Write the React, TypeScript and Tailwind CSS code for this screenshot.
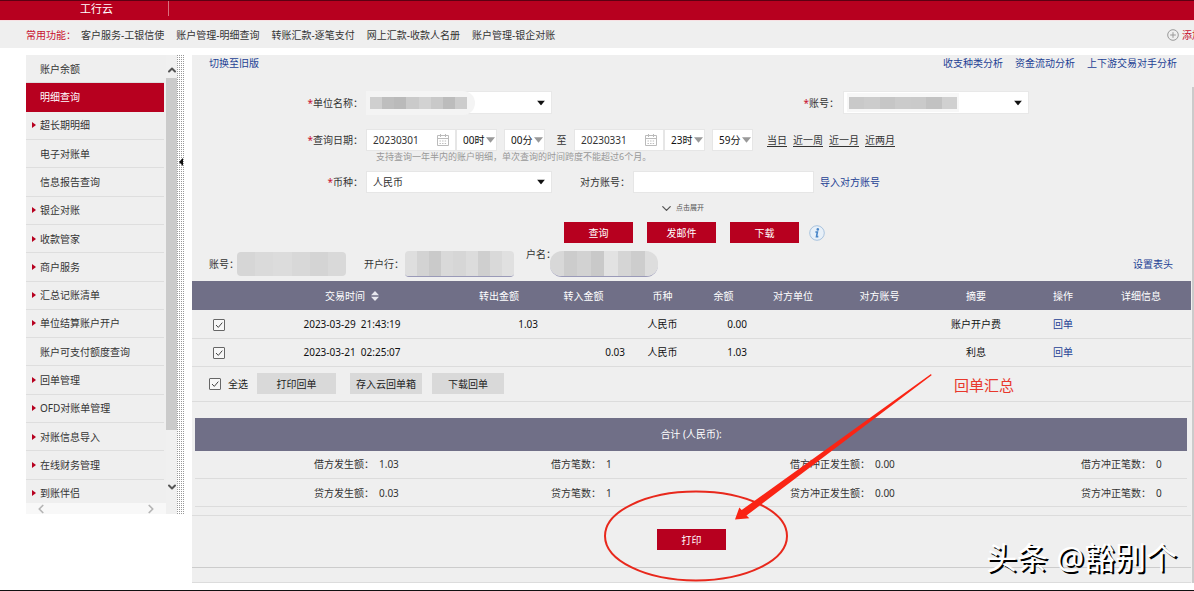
import type { ReactNode } from "react";
import { ChevronDown, ChevronLeft, ChevronRight, ChevronUp } from "lucide-react";

const shortcuts = [
  "客户服务-工银信使",
  "账户管理-明细查询",
  "转账汇款-逐笔支付",
  "网上汇款-收款人名册",
  "账户管理-银企对账",
];

const menuItems = [
  { label: "账户余额" },
  { label: "明细查询", active: true },
  { label: "超长期明细", expandable: true },
  { label: "电子对账单" },
  { label: "信息报告查询" },
  { label: "银企对账", expandable: true },
  { label: "收款管家", expandable: true },
  { label: "商户服务", expandable: true },
  { label: "汇总记账清单", expandable: true },
  { label: "单位结算账户开户", expandable: true },
  { label: "账户可支付额度查询" },
  { label: "回单管理", expandable: true },
  { label: "OFD对账单管理", expandable: true },
  { label: "对账信息导入", expandable: true },
  { label: "在线财务管理", expandable: true },
  { label: "到账伴侣", expandable: true },
];

const records = [
  { time: "2023-03-29  21:43:19", out: "1.03", income: "", currency: "人民币", balance: "0.00", summary: "账户开户费" },
  { time: "2023-03-21  02:25:07", out: "", income: "0.03", currency: "人民币", balance: "1.03", summary: "利息" },
];

const totals = [
  [
    ["借方发生额：", "1.03"],
    ["借方笔数：", "1"],
    ["借方冲正发生额：", "0.00"],
    ["借方冲正笔数：", "0"],
  ],
  [
    ["贷方发生额：", "0.03"],
    ["贷方笔数：", "1"],
    ["贷方冲正发生额：", "0.00"],
    ["贷方冲正笔数：", "0"],
  ],
];

function TopBar() {
  return (
    <header className="flex h-5 border-t border-[#5c0012] bg-[#b7001f] text-white">
      <div className="flex h-[15px] w-[169px] items-center border-r border-[#d9707f] pl-20 text-[11px] leading-none">
        工行云
      </div>
    </header>
  );
}

function ShortcutBar() {
  return (
    <nav className="flex h-7 items-center gap-3 overflow-hidden border-t border-[#f7dfe2] bg-[#efefef] pl-[26px] whitespace-nowrap">
      <span className="-mr-[7px] w-[50px] text-[#c8102e]">常用功能：</span>
      {shortcuts.map((item) => (
        <a href="#" key={item}>{item}</a>
      ))}
      <button className="-mr-2 ml-auto flex shrink-0 items-center gap-[3px] text-[#c8102e]" type="button">
        <svg className="size-3" fill="none" stroke="#999" viewBox="0 0 12 12">
          <circle cx="6" cy="6" r="5.3" />
          <path d="M6 3.2v5.6M3.2 6h5.6" />
        </svg>
        添加
      </button>
    </nav>
  );
}

function Sidebar() {
  return (
    <aside className="flex h-[459px] w-[159px] shrink-0">
      <div className="flex w-[140px] flex-col bg-[#efefef]">
        <div className="h-[448px] overflow-hidden">
          <ul className="grid h-[453px] auto-rows-fr pr-0.5">
            {menuItems.map((item) => (
              <li className={item.active ? "bg-[#b7001f] text-white" : "border-b border-[#dedede]"} key={item.label}>
                <a className="flex h-full items-center pl-1.5" href="#">
                  <span className="w-2">
                    {item.expandable && (
                      <svg className="h-1.5 w-1" viewBox="0 0 4 6">
                        <path d="M0 0l4 3-4 3z" fill="#b7001f" />
                      </svg>
                    )}
                  </span>
                  {item.label}
                </a>
              </li>
            ))}
          </ul>
        </div>
        <div className="flex h-[11px] items-center justify-between bg-[#f8f8f8] px-2 text-[#b5b5b5]">
          <ChevronLeft size={14} strokeWidth={3} />
          <ChevronRight size={14} strokeWidth={3} />
        </div>
      </div>
      <div className="flex w-[11px] flex-col items-center bg-[#f0f0f0] text-[#555]">
        <ChevronUp className="mt-[9px] shrink-0" size={12} strokeWidth={4} />
        <div className="mt-0.5 h-[352px] w-full bg-[#cbcbcb]" />
        <ChevronDown className="mt-[51px] shrink-0" size={12} strokeWidth={4} />
      </div>
      <div className="flex w-2 items-start justify-center bg-[radial-gradient(circle_at_0_0,#999_1px,#fff_1px)] bg-[length:2px_2px]">
        <svg className="mt-[103px] h-2 w-1" viewBox="0 0 4 8">
          <path d="M4 0v8L0 4z" fill="#111" />
        </svg>
      </div>
    </aside>
  );
}

function Mosaic({ tones }: { tones: string[] }) {
  return (
    <span className="flex h-full w-full overflow-hidden">
      {tones.map((tone, i) => (
        <span className={`flex-1 ${tone}`} key={i} />
      ))}
    </span>
  );
}

function Caret({ className }: { className: string }) {
  return (
    <svg className={`pointer-events-none absolute top-1/2 -translate-y-1/2 ${className}`} viewBox="0 0 8 5">
      <path d="M0 0h8L4 5z" fill="currentColor" />
    </svg>
  );
}

function Label({ children, htmlFor, required }: { children: ReactNode; htmlFor: string; required?: boolean }) {
  return (
    <label className="shrink-0 text-right" htmlFor={htmlFor}>
      {required && <span className="text-[#c8102e]">*</span>}
      {children}
    </label>
  );
}

function DateInput({ id, label, value }: { id: string; label: string; value: string }) {
  return (
    <div className="relative">
      <input aria-label={label} className="h-[22px] w-[90px] border border-[#e6e6e6] bg-white pl-1.5" defaultValue={value} id={id} type="text" />
      <svg className="absolute top-[5px] right-[7px] size-3" fill="none" stroke="#bbb" viewBox="0 0 12 12">
        <path d="M.5 1.5h11v10H.5zM.5 4.5h11M3.5 0v3M8.5 0v3" />
        <path d="M2.5 7h7M2.5 9.5h7" strokeDasharray="1.4 1.2" />
      </svg>
    </div>
  );
}

function TimeSelect({ label, value }: { label: string; value: string }) {
  return (
    <div className="relative">
      <select aria-label={label} className="h-[22px] w-[41px] appearance-none border border-[#e6e6e6] bg-white pl-1.5 text-[#111]">
        <option>{value}</option>
      </select>
      <Caret className="right-0.5 h-1.5 w-[9px] text-[#999]" />
    </div>
  );
}

function SearchForm() {
  return (
    <form className="text-[#333]">
      <div className="flex h-[15px] items-center gap-3 pr-[14px] pl-[17px] text-[#1d3f94]">
        <a className="mr-auto" href="#">切换至旧版</a>
        <a href="#">收支种类分析</a>
        <a href="#">资金流动分析</a>
        <a href="#">上下游交易对手分析</a>
      </div>

      <div className="mt-[21px] flex h-[23px] items-center">
        <div className="flex w-[174px] justify-end pr-[3px]">
          <Label htmlFor="company" required>单位名称：</Label>
        </div>
        <div className="relative">
          <select aria-label="单位名称" className="h-[23px] w-[186px] appearance-none border border-[#e8e8e8] bg-white" id="company" />
          <div className="pointer-events-none absolute top-0 left-0 flex h-6 w-[109px] items-center rounded-r-xl bg-[#f4f4f4] pr-2 pl-1">
            <span className="h-3 w-full">
              <Mosaic tones={["bg-[#cfcfcf]", "bg-[#bebebe]", "bg-[#bababa]", "bg-[#cacaca]", "bg-[#d2d2d2]", "bg-[#c9c9c9]", "bg-[#bcbcbc]", "bg-[#cccccc]"]} />
            </span>
          </div>
          <Caret className="right-[7px] h-[5px] w-2 text-[#111]" />
        </div>
        <div className="flex w-[291px] justify-end pr-1">
          <Label htmlFor="account" required>账号：</Label>
        </div>
        <div className="relative">
          <select aria-label="账号" className="h-[23px] w-[186px] appearance-none border border-[#e8e8e8] bg-white" id="account" />
          <div className="pointer-events-none absolute top-0.5 left-1 flex h-[19px] w-[112px] items-center bg-[#f7f7f7] px-0.5">
            <span className="h-3 w-full">
              <Mosaic tones={["bg-[#c9c9c9]", "bg-[#cccccc]", "bg-[#c6c6c6]", "bg-[#cbcbcb]", "bg-[#cacaca]", "bg-[#c2c2c2]", "bg-[#d0d0d0]"]} />
            </span>
          </div>
          <Caret className="right-[7px] h-[5px] w-2 text-[#111]" />
        </div>
      </div>

      <div className="mt-[15px] flex h-[22px] items-center">
        <div className="flex w-[174px] justify-end pr-[3px]">
          <Label htmlFor="date-from" required>查询日期：</Label>
        </div>
        <DateInput id="date-from" label="开始日期" value="20230301" />
        <div className="flex gap-[7px]">
          <TimeSelect label="开始小时" value="00时" />
          <TimeSelect label="开始分钟" value="00分" />
        </div>
        <span className="w-[29px] pl-1 text-center">至</span>
        <DateInput id="date-to" label="结束日期" value="20230331" />
        <div className="flex gap-[7px]">
          <TimeSelect label="结束小时" value="23时" />
          <TimeSelect label="结束分钟" value="59分" />
        </div>
        <div className="ml-[14px] flex gap-1.5 underline underline-offset-2">
          <a href="#">当日</a>
          <a href="#">近一周</a>
          <a href="#">近一月</a>
          <a href="#">近两月</a>
        </div>
      </div>
      <p className="h-3 pl-[184px] text-[9px] leading-3 text-[#999]">支持查询一年半内的账户明细，单次查询的时间跨度不能超过6个月。</p>

      <div className="mt-2 flex h-[22px] items-center">
        <div className="flex w-[174px] justify-end pr-[3px]">
          <Label htmlFor="currency" required>币种：</Label>
        </div>
        <div className="relative">
          <select className="h-[22px] w-[186px] appearance-none border border-[#e6e6e6] bg-white pl-1.5" id="currency">
            <option>人民币</option>
          </select>
          <Caret className="right-[7px] h-[5px] w-2 text-[#111]" />
        </div>
        <div className="flex w-[81px] justify-end pr-[3px]">
          <Label htmlFor="counterparty">对方账号：</Label>
        </div>
        <input className="h-[22px] w-[181px] border border-[#e6e6e6] bg-white px-1.5" id="counterparty" type="text" />
        <a className="ml-1.5 text-[#1d3f94]" href="#">导入对方账号</a>
      </div>

      <button className="mx-auto mt-2 flex h-[14px] items-center gap-0.5 pr-5 text-[7px] text-[#555]" type="button">
        <ChevronDown size={15} strokeWidth={2} />
        点击展开
      </button>

      <div className="mt-[7px] flex items-center justify-center gap-[14px] pl-1.5 text-white">
        <button className="h-[21px] w-[69px] bg-[#b7001f]" type="button">查询</button>
        <button className="h-[21px] w-[69px] bg-[#b7001f]" type="button">发邮件</button>
        <button className="h-[21px] w-[69px] bg-[#b7001f]" type="button">下载</button>
        <svg className="-ml-1 size-4" viewBox="0 0 16 16">
          <circle cx="8" cy="8" fill="#e8f0f8" r="7.3" stroke="#a9c3de" />
          <circle cx="8.8" cy="4.4" fill="#4a86c8" r="1.3" />
          <path d="M6.4 7h2l-.9 4.6h1.8" fill="none" stroke="#4a86c8" strokeWidth="1.6" />
        </svg>
      </div>
    </form>
  );
}

function AccountInfo() {
  return (
    <div className="flex h-[38px] items-center pt-1 pr-[18px] pl-[17px] text-[#333]">
      <span className="w-7 whitespace-nowrap">账号：</span>
      <span className="h-6 w-[109px] overflow-hidden rounded">
        <Mosaic tones={["bg-[#d6d6d6]", "bg-[#dadada]", "bg-[#dcdcdc]", "bg-[#d8d8d8]", "bg-[#d4d4d4]", "bg-[#d9d9d9]"]} />
      </span>
      <span className="ml-[18px] w-[41px] whitespace-nowrap">开户行：</span>
      <span className="h-[26px] w-[109px] overflow-hidden rounded border-b border-[#9a9ab8]">
        <Mosaic tones={["bg-[#dedede]", "bg-[#d3d3d3]", "bg-[#cacaca]", "bg-[#d9d9d9]", "bg-[#d6d6d6]", "bg-[#dcdcdc]", "bg-[#cfcfcf]", "bg-[#d9d9d9]", "bg-[#e0e0e0]"]} />
      </span>
      <span className="ml-3 w-6 self-start whitespace-nowrap">户名：</span>
      <span className="h-[26px] w-[108px] overflow-hidden rounded-xl border-b border-[#9a9ab8]">
        <Mosaic tones={["bg-[#d8d8d8]", "bg-[#cccccc]", "bg-[#d2d2d2]", "bg-[#c9c9c9]", "bg-[#e2e2e2]", "bg-[#d5d5d5]", "bg-[#cdcdcd]", "bg-[#dddddd]"]} />
      </span>
      <a className="ml-auto text-[#1d3f94]" href="#">设置表头</a>
    </div>
  );
}

function Checkbox({ label }: { label: string }) {
  return (
    <span className="relative inline-flex size-3 align-middle">
      <input aria-label={label} className="size-3 appearance-none rounded-[1px] border border-[#666] bg-[#f7f7f7]" defaultChecked type="checkbox" />
      <svg className="pointer-events-none absolute inset-0 size-3" fill="none" stroke="#444" viewBox="0 0 12 12">
        <path d="M3 6l2.3 2.4L9.3 3.6" />
      </svg>
    </span>
  );
}

function RecordTable() {
  return (
    <table className="w-full table-fixed text-center text-[#111]">
      <colgroup>
        <col className="w-[54px]" />
        <col className="w-[212px]" />
        <col className="w-[82px]" />
        <col className="w-[87px]" />
        <col className="w-[71px]" />
        <col className="w-[51px]" />
        <col className="w-[88px]" />
        <col className="w-[85px]" />
        <col className="w-[108px]" />
        <col className="w-[66px]" />
        <col className="w-[90px]" />
        <col className="w-[5px]" />
      </colgroup>
      <thead className="bg-[#706f87] text-white">
        <tr className="h-[29px]">
          <th />
          <th className="font-normal">
            <span className="inline-flex items-center gap-1.5">
              交易时间
              <svg className="h-2.5 w-2" viewBox="0 0 8 10">
                <path d="M0 4.2h8L4 0zM0 5.8h8L4 10z" fill="#e8e8ee" />
              </svg>
            </span>
          </th>
          <th className="font-normal">转出金额</th>
          <th className="font-normal">转入金额</th>
          <th className="font-normal">币种</th>
          <th className="font-normal">余额</th>
          <th className="font-normal">对方单位</th>
          <th className="font-normal">对方账号</th>
          <th className="font-normal">摘要</th>
          <th className="font-normal">操作</th>
          <th className="font-normal">详细信息</th>
          <th />
        </tr>
      </thead>
      <tbody>
        {records.map((record) => (
          <tr className="h-7 border-b border-[#dcdcdc]" key={record.time}>
            <td><Checkbox label={record.time} /></td>
            <td className="whitespace-pre">{record.time}</td>
            <td className="pr-0.5 text-right">{record.out}</td>
            <td className="pr-0.5 text-right">{record.income}</td>
            <td>{record.currency}</td>
            <td className="pr-0.5 text-right">{record.balance}</td>
            <td />
            <td />
            <td>{record.summary}</td>
            <td><a className="text-[#1d3f94]" href="#">回单</a></td>
            <td />
            <td />
          </tr>
        ))}
      </tbody>
    </table>
  );
}

function BatchActions() {
  return (
    <div className="flex h-[35px] items-center border-b border-[#dcdcdc] pl-[17px] text-[#222]">
      <label className="flex w-12 items-center gap-[7px]">
        <Checkbox label="全选" />
        全选
      </label>
      <button className="h-[21px] w-[79px] bg-[#d9d9d9]" type="button">打印回单</button>
      <button className="ml-[14px] h-[21px] w-[72px] bg-[#d9d9d9]" type="button">存入云回单箱</button>
      <button className="ml-2.5 h-[21px] w-[72px] bg-[#d9d9d9]" type="button">下载回单</button>
    </div>
  );
}

function TotalsTable() {
  return (
    <div className="border-b border-[#dcdcdc] pt-4 pr-1 pb-2 pl-[3px]">
      <table className="w-full table-fixed text-[#333]">
        <colgroup>
          <col className="w-[179px]" />
          <col className="w-[75px]" />
          <col className="w-[152px]" />
          <col className="w-[69px]" />
          <col className="w-[200px]" />
          <col className="w-[70px]" />
          <col className="w-[211px]" />
          <col className="w-[36px]" />
        </colgroup>
        <thead className="bg-[#706f87] text-white">
          <tr className="h-[33px]">
            <th className="font-normal" colSpan={8}>合计 (人民币):</th>
          </tr>
        </thead>
        <tbody>
          {totals.map((row) => (
            <tr className="h-7 border-b border-[#dcdcdc]" key={row[0][0]}>
              {row.flatMap(([label, value]) => [
                <th className="text-right font-normal whitespace-nowrap" key={label} scope="row">{label}</th>,
                <td className="pl-[5px]" key={`${label}-value`}>{value}</td>,
              ])}
            </tr>
          ))}
        </tbody>
      </table>
    </div>
  );
}

function Annotation() {
  return (
    <div className="pointer-events-none absolute inset-0">
      <svg className="absolute top-[310px] left-[408px] h-[220px] w-[340px]" viewBox="600 365 340 220">
        <ellipse cx="696" cy="536" fill="none" rx="91" ry="44.5" stroke="#e8281c" strokeWidth="2" />
        <path d="M931 374l.6 1.2L746.5 515.6l2.8 2.6-14.3 1.2 4.3-11.8 2.4 2.4z" fill="#fa2414" />
      </svg>
      <p className="absolute top-[320px] left-[762px] text-[15px] leading-5 whitespace-nowrap text-[#e8382c]">回单汇总</p>
      <p className="absolute right-[14px] bottom-1.5 text-[31px] leading-10 whitespace-nowrap text-white [text-shadow:2px_2px_0_#000]">头条 @豁别个</p>
    </div>
  );
}

export default function App() {
  return (
    <div className="min-h-screen overflow-x-clip bg-white font-['Noto_Sans','Noto_Sans_CJK_SC',sans-serif] text-[10px] leading-[14px] text-[#333]">
      <TopBar />
      <ShortcutBar />
      <div className="flex border-b border-[#111] pt-[7px] pb-[7px] pl-[26px]">
        <Sidebar />
        <main className="relative ml-[7px] flex-1 bg-[#efefef]">
          <SearchForm />
          <AccountInfo />
          <RecordTable />
          <BatchActions />
          <TotalsTable />
          <div className="border-b border-[#ccc] pt-[13px] pb-[17px] text-center">
            <button className="h-[21px] w-[69px] bg-[#b7001f] text-white" type="button">打印</button>
          </div>
          <div className="h-[15px] border-b border-[#dcdcdc]" />
          <Annotation />
        </main>
        <div className="flex w-1 flex-col bg-[#f0f0f0] pt-8 pl-px">
          <div className="flex-1 bg-[#cbcbcb]" />
        </div>
      </div>
    </div>
  );
}
